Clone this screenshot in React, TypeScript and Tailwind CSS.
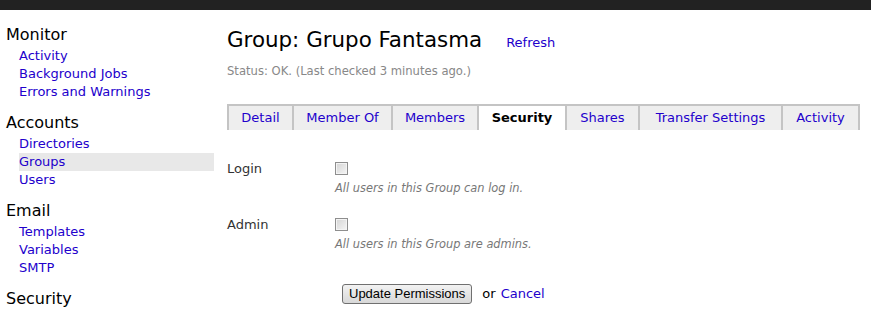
const sections = [
  { title: "Monitor", links: ["Activity", "Background Jobs", "Errors and Warnings"] },
  { title: "Accounts", links: ["Directories", "Groups", "Users"] },
  { title: "Email", links: ["Templates", "Variables", "SMTP"] },
  { title: "Security", links: [] as string[] },
];

const tabs = [
  { label: "Detail", w: "w-[65px]" },
  { label: "Member Of", w: "w-[99px]" },
  { label: "Members", w: "w-[86px]" },
  { label: "Security", w: "w-[88px]" },
  { label: "Shares", w: "w-[73px]" },
  { label: "Transfer Settings", w: "w-[143px]" },
  { label: "Activity", w: "w-[79px]" },
];

function Permission({ label, note }: { label: string; note: string }) {
  return (
    <div className="flex">
      <div className="w-[108px] pt-[1px] text-[13px] leading-[16px] text-[#333]">{label}</div>
      <div className="flex flex-col">
        <input
          type="checkbox"
          className="appearance-none w-[13px] h-[13px] mt-[2px] border border-[#8e8e8e] bg-gradient-to-br from-[#d4d4d4] to-[#f6f6f6] shadow-[inset_0_0_0_1px_#f4f4f4]"
        />
        <span className="mt-[6px] text-[11.4px] leading-[14px] italic text-[#777]">{note}</span>
      </div>
    </div>
  );
}

export default function App() {
  return (
    <div className="w-[871px] h-[310px] overflow-hidden bg-white font-['DejaVu_Sans',sans-serif]">
      {/* top bar */}
      <div className="h-[10px] bg-[#222]" />

      <div className="flex">
        {/* Sidebar */}
        <div className="w-[214px] shrink-0 pl-[6px] pt-[13px]">
          {sections.map((s) => (
            <div key={s.title} className="mb-[10px]">
              <div className="text-[16px] leading-[24px] text-black">{s.title}</div>
              {s.links.map((l) => (
                <div
                  key={l}
                  className={`ml-[13px] text-[13px] leading-[18px] text-[#2200cc] ${
                    l === "Groups" ? "bg-[#e8e8e8]" : ""
                  }`}
                >
                  {l}
                </div>
              ))}
            </div>
          ))}
        </div>

        {/* Main */}
        <div className="flex-1 min-w-0 pl-[13px]">
          <div className="flex items-baseline mt-[16px]">
            <h1 className="text-[21.4px] leading-[28px] text-black">Group: Grupo Fantasma</h1>
            <a className="ml-[24px] text-[13px] text-[#2200cc]">Refresh</a>
          </div>
          <div className="mt-[10px] text-[11.6px] leading-[14px] text-[#888]">
            Status: OK. (Last checked 3 minutes ago.)
          </div>

          {/* Tabs */}
          <div className="mt-[26px] flex">
            {tabs.map((t) => (
              <div
                key={t.label}
                className={`${t.w} shrink-0 h-[26px] flex items-center justify-center border-t-2 border-l-2 border-[#c4c4c4] last:border-r-2 text-[13px] ${
                  t.label === "Security" ? "bg-white font-bold text-black" : "bg-[#eeeeee] text-[#2200cc]"
                }`}
              >
                {t.label}
              </div>
            ))}
          </div>

          {/* Permissions */}
          <div className="mt-[30px] flex flex-col gap-[21px]">
            <Permission label="Login" note="All users in this Group can log in." />
            <Permission label="Admin" note="All users in this Group are admins." />
          </div>

          <div className="mt-[33px] ml-[115px] flex items-center">
            <button className="h-[20px] px-[6px] border border-[#707070] rounded-[3px] bg-gradient-to-b from-[#f2f2f2] to-[#d8d8d8] text-[13px] leading-[16px] font-['Liberation_Sans',sans-serif] text-black">
              Update Permissions
            </button>
            <span className="ml-[10px] text-[13px] text-black">or</span>
            <a className="ml-[5px] text-[13px] text-[#2200cc]">Cancel</a>
          </div>
        </div>
      </div>
    </div>
  );
}
